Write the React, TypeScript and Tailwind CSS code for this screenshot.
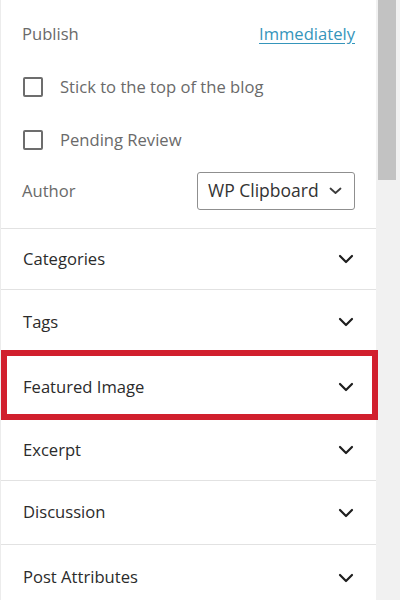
import React from 'react';

const sections = ['Categories', 'Tags', 'Featured Image', 'Excerpt', 'Discussion', 'Post Attributes'];

const Chevron = ({ small }: { small?: boolean }) =>
  small ? (
    <svg width="13" height="8" viewBox="0 0 13 8" fill="none">
      <path d="M1.5 1.5 6.5 6 11.5 1.5" stroke="#3c3c3c" strokeWidth="1.8" strokeLinecap="round" strokeLinejoin="round" />
    </svg>
  ) : (
    <svg width="16" height="10" viewBox="0 0 16 10" fill="none">
      <path d="M2 2 8 8 14 2" stroke="#1e1e1e" strokeWidth="2.2" strokeLinecap="round" strokeLinejoin="round" />
    </svg>
  );

const Checkbox = ({ label }: { label: string }) => (
  <div className="flex items-center h-[20px]">
    <span className="w-[20px] h-[20px] ml-[1px] border-2 border-[#6d6d6d] rounded-[2px]" />
    <span className="ml-[17px] text-[#6a6a6a]">{label}</span>
  </div>
);

export default function App() {
  return (
    <div className="flex w-[400px] h-[600px] overflow-hidden bg-white" style={{ fontFamily: '"Open Sans", "Noto Sans", sans-serif' }}>
      <div className="w-[376px] shrink-0 text-[16.6px] leading-none border-l border-[#ececec]">
        {/* Status & visibility rows */}
        <div className="flex flex-col pl-[21px] pr-[21px] pt-[20px] pb-[18px] border-b border-[#e2e2e2]">
          <div className="flex items-center justify-between h-[28px]">
            <span className="text-[#6a6a6a]">Publish</span>
            <span className="text-[#3595bb] underline underline-offset-[3px]">Immediately</span>
          </div>
          <div className="mt-[29px]">
            <Checkbox label="Stick to the top of the blog" />
          </div>
          <div className="mt-[33px]">
            <Checkbox label="Pending Review" />
          </div>
          <div className="mt-[22px] flex items-center justify-between h-[38px]">
            <span className="text-[#6a6a6a]">Author</span>
            <div className="flex items-center gap-[10px] h-[38px] w-[158px] pl-[10px] pr-[10px] border border-[#8f8f8f] rounded-[3px]">
              <span className="text-[#333] text-[17.5px]">WP Clipboard</span>
              <Chevron small />
            </div>
          </div>
        </div>

        {/* Collapsible panels */}
        {sections.map((name) => {
          const featured = name === 'Featured Image';
          const h =
            name === 'Categories' ? 'h-[61px]' :
            name === 'Tags' ? 'h-[64px]' :
            featured ? 'h-[66px]' :
            name === 'Discussion' ? 'h-[64px]' :
            name === 'Post Attributes' ? 'h-[66px]' : 'h-[61px]';
          return (
            <div
              key={name}
              className={`relative flex items-center justify-between pl-[22px] pr-[22px] ${h} ${featured || name === 'Tags' ? '' : 'border-b border-[#e2e2e2]'}`}
            >
              <span className="text-[#2b2b2b]">{name}</span>
              <Chevron />
              {featured && (
                <div className="absolute top-[-4px] bottom-0 left-0 right-[-2px] border-[6px] border-[#d11f2d]" />
              )}
            </div>
          );
        })}
      </div>

      {/* Scrollbar */}
      <div className="flex-1 bg-[#f1f1f1] pl-[2px] pr-[4px]">
        <div className="h-[180px] bg-[#c2c2c2]" />
      </div>
    </div>
  );
}
